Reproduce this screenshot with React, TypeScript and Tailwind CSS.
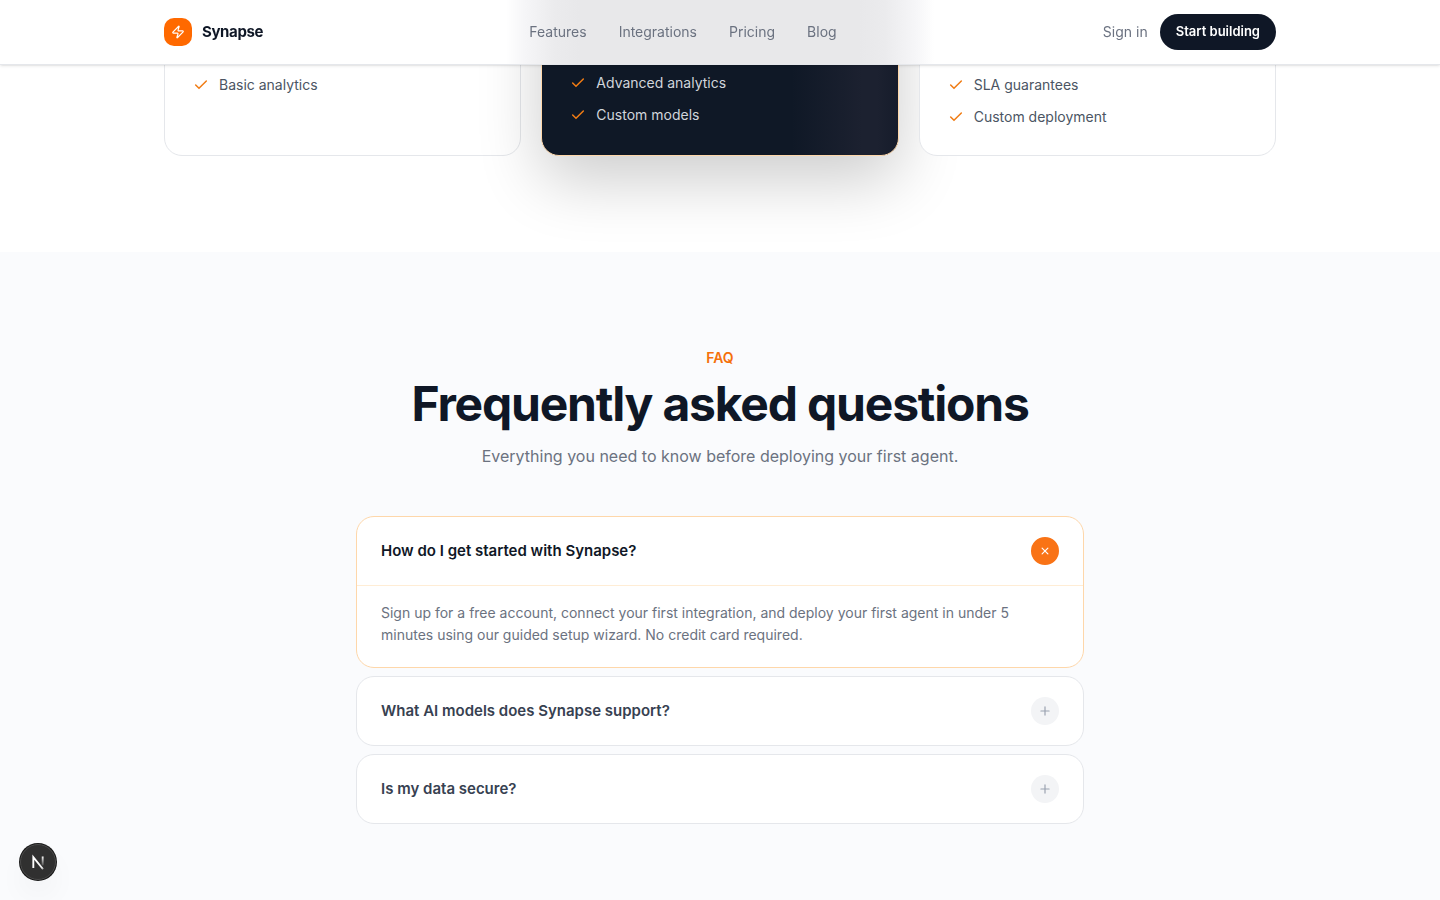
import { useState } from "react";
import { Check, Plus, Zap } from "lucide-react";

const navLinks = ["Features", "Integrations", "Pricing", "Blog"];

const faqs = [
  {
    question: "How do I get started with Synapse?",
    answer:
      "Sign up for a free account, connect your first integration, and deploy your first agent in under 5 minutes using our guided setup wizard. No credit card required.",
  },
  {
    question: "What AI models does Synapse support?",
    answer: "Synapse supports all major AI models.",
  },
  {
    question: "Is my data secure?",
    answer: "Yes. Your data is encrypted in transit and at rest.",
  },
];

function Header() {
  return (
    <header className="fixed inset-x-0 top-0 z-20 border-b border-gray-200 bg-[linear-gradient(to_right,#fff_calc(50%-214px),#f6f6f8_calc(50%-196px),#ebebed_calc(50%-165px),#e8e8ea_calc(50%-140px),#e8e8ea_calc(50%+140px),#ebebed_calc(50%+165px),#f6f6f8_calc(50%+196px),#fff_calc(50%+214px))] shadow-sm">
      <div className="mx-auto flex h-16 max-w-[1152px] items-center justify-between px-5">
        <a href="#" className="flex items-center gap-2.5">
          <span className="flex size-7 items-center justify-center rounded-[10px] bg-[#ff6900] text-white">
            <Zap className="size-3.5" />
          </span>
          <span className="text-[15px] font-bold tracking-tight text-[#0f1726]">Synapse</span>
        </a>
        <nav className="flex items-center gap-8">
          {navLinks.map((label) => (
            <a key={label} href="#" className="text-sm text-[#6b7280]">
              {label}
            </a>
          ))}
        </nav>
        <div className="flex items-center gap-3">
          <a href="#" className="text-sm text-[#6b7280]">
            Sign in
          </a>
          <button className="h-9 rounded-full bg-[#0f1726] px-4 text-[13px] font-semibold text-white">
            Start building
          </button>
        </div>
      </div>
    </header>
  );
}

function FeatureList({ items, className }: { items: string[]; className: string }) {
  return (
    <ul className={`flex flex-col gap-3 text-sm ${className}`}>
      {items.map((item) => (
        <li key={item} className="flex items-center gap-2.5">
          <Check className="size-4 text-[#f07c14]" strokeWidth={2.25} />
          {item}
        </li>
      ))}
    </ul>
  );
}

function Pricing() {
  return (
    <section className="overflow-hidden bg-white pb-24">
      <div className="mx-auto -mt-24 grid max-w-[1152px] grid-cols-3 gap-5 px-5">
        <div className="rounded-[18px] border border-gray-200 bg-white px-7 pt-[170px] pb-7">
          <FeatureList items={["Basic analytics"]} className="text-[#4b5563]" />
        </div>
        <div className="rounded-[18px] border border-[#fed7aa] bg-[#0f1826] bg-[linear-gradient(to_right,transparent_70%,#1c2130_90%,#1c2130_94%,#161c2b)] px-7 pt-[168px] pb-7 shadow-[0_24px_64px_rgba(0,0,0,0.2)]">
          <FeatureList items={["Advanced analytics", "Custom models"]} className="text-[#d1d5db]" />
        </div>
        <div className="rounded-[18px] border border-gray-200 bg-white px-7 pt-[170px] pb-7">
          <FeatureList items={["SLA guarantees", "Custom deployment"]} className="text-[#4b5563]" />
        </div>
      </div>
    </section>
  );
}

function Faq() {
  const [openIndex, setOpenIndex] = useState(0);

  return (
    <section className="bg-[#fafbfd] px-5 py-24">
      <div className="text-center">
        <p className="text-sm leading-5 font-semibold text-[#f5700a]">FAQ</p>
        <h2 className="mt-2 text-5xl leading-[56px] font-bold tracking-tight text-[#0f1726]">
          Frequently asked questions
        </h2>
        <p className="mt-3 text-base leading-6 text-[#6b7280]">
          Everything you need to know before deploying your first agent.
        </p>
      </div>
      <div className="mx-auto mt-12 flex max-w-[728px] flex-col gap-2">
        {faqs.map((faq, index) => {
          const open = index === openIndex;
          return (
            <div
              key={faq.question}
              className={`rounded-[18px] border bg-white ${open ? "border-[#fed7aa]" : "border-gray-200"}`}
            >
              <button
                aria-expanded={open}
                onClick={() => setOpenIndex(open ? -1 : index)}
                className="flex w-full items-center justify-between px-6 py-5 text-left"
              >
                <span
                  className={`text-[15px] leading-6 font-semibold ${open ? "text-[#0f1726]" : "text-[#374151]"}`}
                >
                  {faq.question}
                </span>
                <span
                  className={`flex size-7 items-center justify-center rounded-full ${open ? "rotate-45 bg-[#f97316] text-white" : "bg-gray-100 text-gray-400"}`}
                >
                  <Plus className="size-3.5" />
                </span>
              </button>
              {open && (
                <p className="border-t border-[#ffedd5] px-6 pt-4 pb-[21px] text-sm leading-[22px] text-[#6b7280]">
                  {faq.answer}
                </p>
              )}
            </div>
          );
        })}
      </div>
    </section>
  );
}

function DevButton() {
  return (
    <button
      aria-label="Open developer tools"
      className="fixed bottom-5 left-5 z-20 flex size-9 items-center justify-center rounded-full border border-[#4a4a4a] bg-[#303030] shadow-[0_0_0_1px_#171717,0_16px_32px_-8px_rgba(0,0,0,0.12)]"
    >
      <svg viewBox="0 0 40 40" className="size-9" fill="none">
        <defs>
          <linearGradient id="diagonal" x1="19" y1="20" x2="27" y2="30" gradientUnits="userSpaceOnUse">
            <stop stopColor="white" />
            <stop offset="0.7" stopColor="white" stopOpacity="0.9" />
            <stop offset="1" stopColor="white" stopOpacity="0.1" />
          </linearGradient>
          <linearGradient id="stem" x1="26" y1="13" x2="26" y2="26" gradientUnits="userSpaceOnUse">
            <stop stopColor="white" />
            <stop offset="1" stopColor="white" stopOpacity="0" />
          </linearGradient>
        </defs>
        <path d="M14.5 27V14.2L26 28.5" stroke="url(#diagonal)" strokeWidth="2.2" />
        <path d="M25.5 13.5V24" stroke="url(#stem)" strokeWidth="2.2" />
      </svg>
    </button>
  );
}

export default function App() {
  return (
    <div className="min-h-screen bg-[#fafbfd] font-['Inter',sans-serif] antialiased">
      <Header />
      <main>
        <Pricing />
        <Faq />
      </main>
      <DevButton />
    </div>
  );
}
